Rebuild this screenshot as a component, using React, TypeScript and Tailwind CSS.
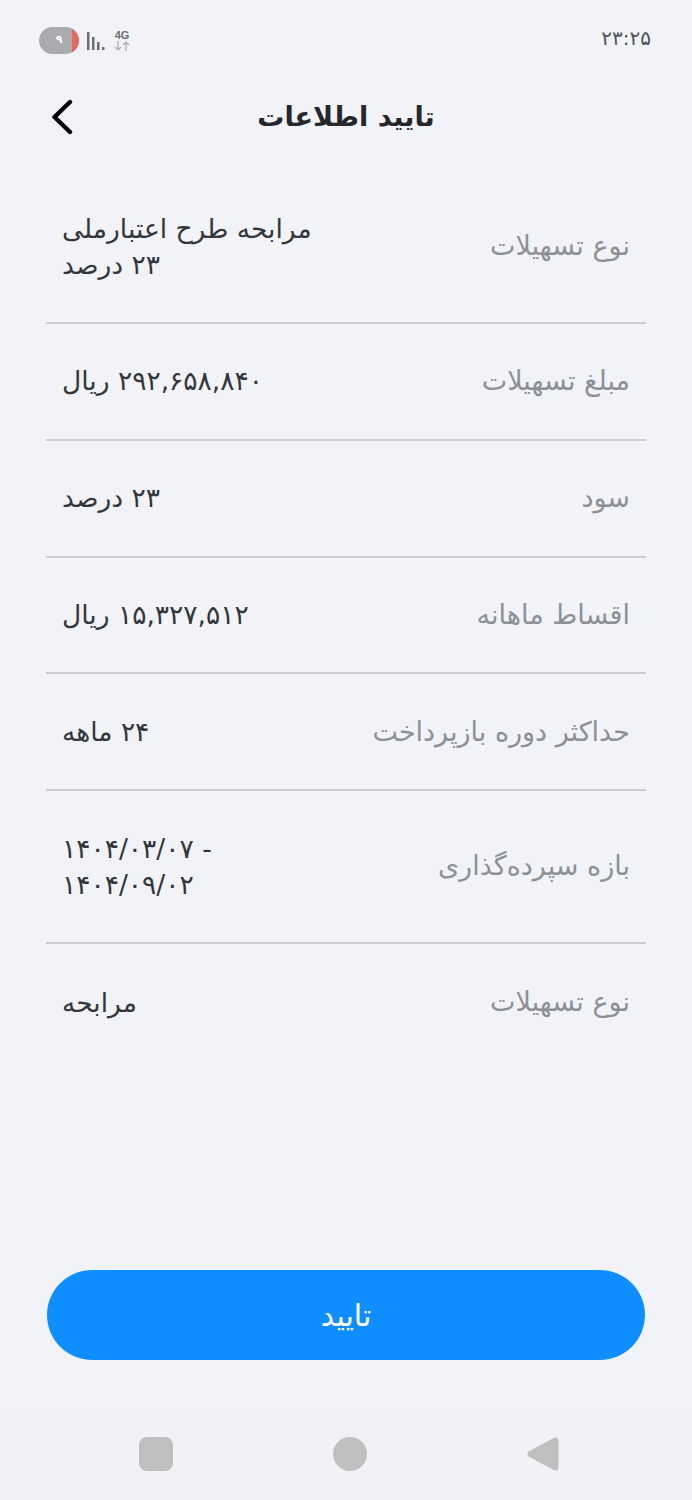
const FONT = "font-['DejaVu_Sans','Noto_Sans',sans-serif]";

type Row = {
  label: string;
  value: string;
  tall?: boolean;
  ltr?: boolean;
};

const ROWS: Row[] = [
  { label: "نوع تسهیلات", value: "مرابحه طرح اعتبارملی ۲۳ درصد", tall: true },
  { label: "مبلغ تسهیلات", value: "۲۹۲,۶۵۸,۸۴۰ ریال" },
  { label: "سود", value: "۲۳ درصد" },
  { label: "اقساط ماهانه", value: "۱۵,۳۲۷,۵۱۲ ریال" },
  { label: "حداکثر دوره بازپرداخت", value: "۲۴ ماهه" },
  { label: "بازه سپرده‌گذاری", value: "۱۴۰۴/۰۳/۰۷ - ۱۴۰۴/۰۹/۰۲", tall: true, ltr: true },
  { label: "نوع تسهیلات", value: "مرابحه" },
];

function StatusBar() {
  return (
    <div dir="ltr" className="flex h-[80px] items-start justify-between pl-[39px] pr-[41px] pt-[27px]">
      <div className="flex items-center gap-[8px]">
        <div className="relative flex h-[27px] w-[40px] items-center justify-center overflow-hidden rounded-full bg-[#a9abae]">
          <span className="text-[11px] font-bold text-white">۹</span>
          <div className="absolute inset-y-0 right-0 w-[7px] bg-[#e8685f]" />
        </div>
        <svg width="18" height="18" viewBox="0 0 18 18" fill="#6b6e73">
          <rect x="0" y="0" width="2.5" height="18" />
          <rect x="5" y="5" width="2.5" height="13" />
          <rect x="10" y="10" width="2.5" height="8" />
          <rect x="15" y="15" width="2.5" height="3" />
        </svg>
        <div className="flex flex-col items-center">
          <span className="font-['Liberation_Sans',sans-serif] text-[11px] font-bold leading-[11px] text-[#6b6e73]">4G</span>
          <svg width="18" height="10" viewBox="0 0 18 10" fill="none" stroke="#a9abae" strokeWidth="1.2">
            <path d="M5 0v9M2 6l3 3 3-3" />
            <path d="M13 10V1M10 4l3-3 3 3" />
          </svg>
        </div>
      </div>
      <span className="text-[20px] leading-[22px] tracking-[0.5px] text-[#50535a]">۲۳:۲۵</span>
    </div>
  );
}

function Header() {
  return (
    <div className="relative flex h-[74px] items-center justify-center">
      <button className="absolute left-[51px] top-[19px]">
        <svg width="22" height="36" viewBox="0 0 22 36" fill="none" stroke="#000" strokeWidth="4.4" strokeLinecap="round" strokeLinejoin="round">
          <path d="M19 3 3.5 18 19 33" />
        </svg>
      </button>
      <h1 className="text-[27px] font-bold text-[#25272c]">تایید اطلاعات</h1>
    </div>
  );
}

export default function App() {
  return (
    <div dir="rtl" className={`flex h-[1500px] w-[692px] flex-col bg-[#f1f3f8] ${FONT}`}>
      <StatusBar />
      <Header />

      <div className="mt-[17px] px-[46px]">
        {ROWS.map((row, i) => (
          <div
            key={i}
            className={`flex items-center justify-between px-[16px] ${row.tall ? "h-[153px]" : "h-[116.8px]"} ${i < ROWS.length - 1 ? "border-b-2 border-[#cbcdd1]" : ""}`}
          >
            <span className="text-[27px] text-[#8d9097]">{row.label}</span>
            <span
              dir={row.ltr ? "ltr" : "rtl"}
              className="w-[270px] text-left text-[26.5px] leading-[36px] text-[#33363b]"
            >
              {row.value}
            </span>
          </div>
        ))}
      </div>

      <div className="mt-auto px-[47px]">
        <button className="flex h-[90px] w-full items-center justify-center rounded-full bg-[#0f8fff] text-[30px] text-white">
          تایید
        </button>
      </div>

      <div dir="ltr" className="mt-[52px] flex h-[88px] items-start justify-between bg-[#f0f2f6] pl-[139px] pr-[133px] pt-[25px]">
        <div className="h-[34px] w-[34px] rounded-[8px] bg-[#bfbfc0]" />
        <div className="h-[34px] w-[34px] rounded-full bg-[#bfbfc0]" />
        <svg width="32" height="34" viewBox="0 0 32 34" fill="#bfbfc0" stroke="#bfbfc0" strokeWidth="6" strokeLinejoin="round">
          <path d="M3.5 17 28.5 3.5v27z" />
        </svg>
      </div>
    </div>
  );
}
